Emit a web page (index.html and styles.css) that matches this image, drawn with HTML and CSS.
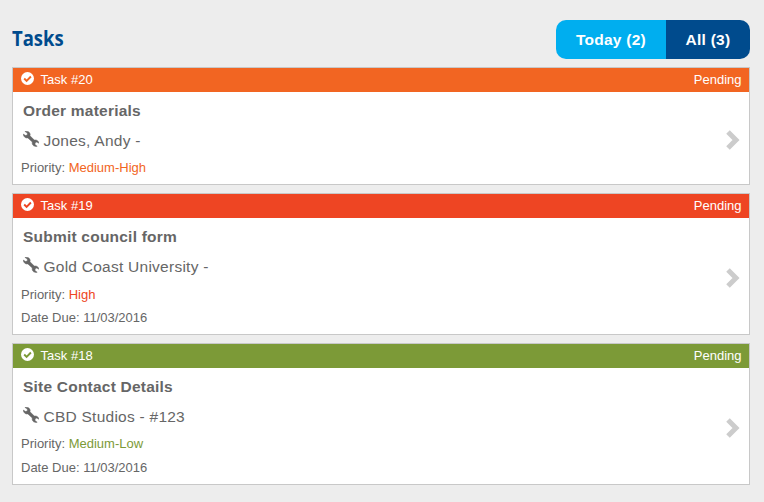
FILE: index.html
```html
<!DOCTYPE html>
<html lang="en">
<head>
<meta charset="utf-8">
<title>Tasks</title>
<link rel="stylesheet" href="styles.css">
</head>
<body>
<svg class="defs" aria-hidden="true">
  <symbol id="check" viewBox="0 0 13 13"><circle cx="6.5" cy="6.5" r="6.5" fill="#fff"/><path d="M3.2 6.5 5.6 8.9 9.9 4.5" fill="none" stroke="currentColor" stroke-width="1.9"/></symbol>
  <symbol id="wrench" viewBox="0 0 16 16"><path fill="currentColor" stroke="currentColor" stroke-width=".5" d="M.2 3.1 2.7 4.6 4.4 3.8 4.3 1.9 1.9.4C4.3-.4 6.8.8 7.2 3.2L7 4.8 11.3 9.1C13.5 8.4 15.7 9.8 15.9 12.2L13.7 11 12 12 12.1 13.8 14.2 15.2C11.7 16.1 9.2 14.5 9.1 12.1L9.3 11.1 4.9 6.9C2.7 7.6.3 5.7.2 3.1Z"/></symbol>
  <symbol id="chevron" viewBox="0 0 14 20"><path d="M2 2 10 10 2 18" fill="none" stroke="currentColor" stroke-width="5"/></symbol>
</svg>
<main class="panel">
  <header class="top">
    <h1 class="title">Tasks</h1>
    <nav class="tabs"><a class="tab today">Today (2)</a><a class="tab all">All (3)</a></nav>
  </header>
  <article class="card medium-high">
    <div class="bar"><svg class="check"><use href="#check"/></svg><span>Task #20</span><span class="status">Pending</span></div>
    <div class="body">
      <h2 class="name">Order materials</h2>
      <p class="client"><svg class="wrench"><use href="#wrench"/></svg>Jones, Andy -</p>
      <p class="meta">Priority: <span class="level">Medium-High</span></p>
      <svg class="chevron"><use href="#chevron"/></svg>
    </div>
  </article>
  <article class="card high">
    <div class="bar"><svg class="check"><use href="#check"/></svg><span>Task #19</span><span class="status">Pending</span></div>
    <div class="body">
      <h2 class="name">Submit council form</h2>
      <p class="client"><svg class="wrench"><use href="#wrench"/></svg>Gold Coast University -</p>
      <p class="meta">Priority: <span class="level">High</span></p>
      <p class="meta">Date Due: 11/03/2016</p>
      <svg class="chevron"><use href="#chevron"/></svg>
    </div>
  </article>
  <article class="card medium-low">
    <div class="bar"><svg class="check"><use href="#check"/></svg><span>Task #18</span><span class="status">Pending</span></div>
    <div class="body">
      <h2 class="name">Site Contact Details</h2>
      <p class="client"><svg class="wrench"><use href="#wrench"/></svg>CBD Studios - #123</p>
      <p class="meta">Priority: <span class="level">Medium-Low</span></p>
      <p class="meta">Date Due: 11/03/2016</p>
      <svg class="chevron"><use href="#chevron"/></svg>
    </div>
  </article>
</main>
</body>
</html>
```
FILE: styles.css
```css
* { box-sizing: border-box; }
body { margin: 0; background: #ededed; color: #666; font-family: "Liberation Sans", Arial, sans-serif; }
h1, h2, p { margin: 0; }
.defs { display: none; }
.panel { padding: 20px 14px 0 12px; }
.top { display: flex; justify-content: space-between; height: 47px; }
.title { color: #004b8d; font: bold 21px/36px "Open Sans", sans-serif; height: 36px; transform: scaleX(0.88); transform-origin: left; }
.tabs { display: flex; height: 39px; border-radius: 10px; overflow: hidden; }
.tab { color: #fff; font-size: 15.5px; font-weight: bold; line-height: 40px; text-align: center; letter-spacing: 0.25px; }
.today { width: 110px; background: #00aeef; }
.all { width: 84px; background: #004b8d; }
.card { display: flex; flex-direction: column; height: 142px; margin-bottom: 8px; background: #fff; border: 1px solid #c8c8c8; }
.medium-high { height: 118px; --accent: #f26522; }
.high { --accent: #ee4523; }
.medium-low { --accent: #7c9a37; }
.bar { display: flex; height: 24px; padding: 0 7.5px 0 8px; background: var(--accent); color: #fff; font-size: 13px; line-height: 24px; }
.check { width: 13px; height: 13px; margin: 4px 6.6px 0 0; color: var(--accent); }
.status { margin-left: auto; }
.body { position: relative; flex: 1; padding: 9px 8px 0; }
.name { margin-left: 2px; font-size: 15.5px; line-height: 20px; letter-spacing: 0.22px; }
.client { display: flex; margin: 10px 0 5px 2px; font-size: 15.5px; line-height: 20px; letter-spacing: 0.25px; }
.wrench { width: 16px; height: 16px; margin-right: 4.5px; }
.meta { font-size: 13px; line-height: 24px; }
.level { color: var(--accent); }
.chevron { position: absolute; right: 9px; top: 50%; width: 14px; height: 20px; margin-top: -8px; color: #ccc; }
.high .meta:nth-of-type(2) { margin-top: 6px; margin-bottom: -1px; }
```
